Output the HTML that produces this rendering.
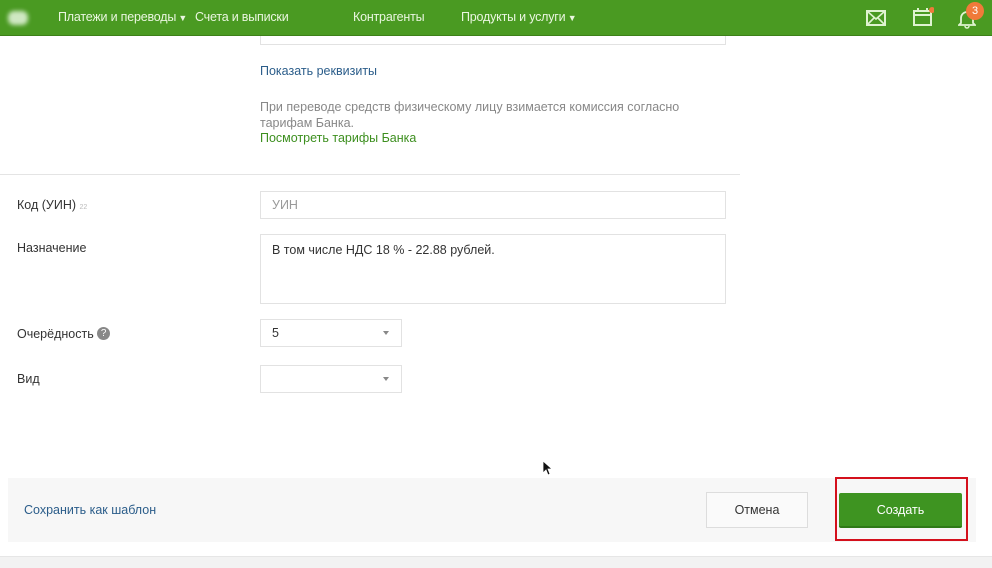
<!DOCTYPE html>
<html><head><meta charset="utf-8"><style>
*{box-sizing:border-box;margin:0;padding:0}
body{width:992px;height:568px;overflow:hidden;background:#fff;font-family:"Liberation Sans",sans-serif;position:relative;color:#333}
.hdr{position:absolute;left:0;top:0;width:992px;height:36px;background:#4a9a22;border-bottom:1px solid #3d8019}
.hdr span.n{position:absolute;top:10px;color:#eaf6e0;font-size:12.5px;letter-spacing:-0.2px;white-space:nowrap}
.ab{position:absolute}
.lbl{position:absolute;left:17px;font-size:12.5px;color:#333;white-space:nowrap}
.inp{position:absolute;border:1px solid #e2e2e2;background:#fff;font-size:12.5px;padding:0 11px}
.caret{position:absolute;right:12px;top:50%;margin-top:-2px;border-left:3px solid transparent;border-right:3px solid transparent;border-top:4px solid #888}
</style></head><body>
<div class="hdr">
<div class="ab" style="left:8px;top:11px;width:20px;height:14px;background:#cfe8c2;border-radius:6px;filter:blur(2px)"></div>
<span class="n" style="left:58px">Платежи и переводы<span style="font-size:9px"> ▼</span></span>
<span class="n" style="left:195px">Счета и выписки</span>
<span class="n" style="left:353px">Контрагенты</span>
<span class="n" style="left:461px">Продукты и услуги<span style="font-size:9px"> ▼</span></span>
<svg class="ab" style="left:866px;top:10px" width="20" height="16" viewBox="0 0 20 16"><rect x="1" y="1" width="18" height="14" fill="none" stroke="#dff3d0" stroke-width="2"/><path d="M1 1L10 9L19 1M1 15L8 8M19 15L12 8" fill="none" stroke="#dff3d0" stroke-width="1.6"/></svg>
<svg class="ab" style="left:912px;top:7px" width="22" height="20" viewBox="0 0 22 20"><rect x="2" y="4" width="17" height="14" fill="none" stroke="#dff3d0" stroke-width="2"/><path d="M2 8H19M6 1V5M15 1V5" stroke="#dff3d0" stroke-width="2"/><circle cx="20" cy="3" r="3" fill="#f07a3a"/></svg>
<svg class="ab" style="left:958px;top:9px" width="18" height="20" viewBox="0 0 18 20"><path d="M3 14V9A6 6 0 0 1 15 9V14L17 16H1Z" fill="none" stroke="#dff3d0" stroke-width="1.8"/><path d="M7 17A2 2 0 0 0 11 17" stroke="#dff3d0" stroke-width="1.5" fill="none"/></svg>
<div class="ab" style="left:966px;top:2px;width:18px;height:18px;border-radius:50%;background:#f07a3a;color:#fff;font-size:11px;text-align:center;line-height:18px">3</div>
</div>
<div class="ab" style="left:260px;top:36px;width:466px;height:9px;border:1px solid #e2e2e2;border-top:none"></div>
<div class="ab" style="left:260px;top:64px;font-size:12.5px;color:#2b5d8a">Показать реквизиты</div>
<div class="ab" style="left:260px;top:99px;width:470px;font-size:12.5px;line-height:16px;color:#888">При переводе средств физическому лицу взимается комиссия согласно тарифам Банка.</div>
<div class="ab" style="left:260px;top:131px;font-size:12.5px;color:#3d8f1f">Посмотреть тарифы Банка</div>
<div class="ab" style="left:0;top:174px;width:740px;height:1px;background:#e4e4e4"></div>
<div class="lbl" style="top:198px">Код (УИН) <span style="font-size:7px;color:#bbb">22</span></div>
<div class="inp" style="left:260px;top:191px;width:466px;height:28px;line-height:26px;color:#999">УИН</div>
<div class="lbl" style="top:241px">Назначение</div>
<div class="inp" style="left:260px;top:234px;width:466px;height:70px;padding-top:8px">В том числе НДС 18 % - 22.88 рублей.</div>
<div class="lbl" style="top:327px">Очерёдность <span style="display:inline-block;width:13px;height:13px;border-radius:50%;background:#888;color:#fff;font-size:10px;text-align:center;line-height:13px;vertical-align:middle;margin-top:-3px">?</span></div>
<div class="inp" style="left:260px;top:319px;width:142px;height:28px;line-height:26px">5<div class="caret"></div></div>
<div class="lbl" style="top:372px">Вид</div>
<div class="inp" style="left:260px;top:365px;width:142px;height:28px"><div class="caret"></div></div>
<svg class="ab" style="left:542px;top:460px" width="10" height="16" viewBox="0 0 10 16"><path d="M1 1V13L4 10L6 15L8 14L6 9H10Z" fill="#111" stroke="#fff" stroke-width=".8"/></svg>
<div class="ab" style="left:8px;top:478px;width:968px;height:64px;background:#f7f7f7"></div>
<div class="ab" style="left:0;top:556px;width:992px;height:12px;background:#f2f2f2;border-top:1px solid #e6e6e6"></div>
<div class="ab" style="left:24px;top:503px;font-size:12.5px;color:#2b5d8a">Сохранить как шаблон</div>
<div class="ab" style="left:706px;top:492px;width:102px;height:36px;border:1px solid #ddd;background:#fafafa;font-size:12.5px;text-align:center;line-height:34px;color:#333">Отмена</div>
<div class="ab" style="left:835px;top:477px;width:133px;height:64px;border:2px solid #d4101c"></div>
<div class="ab" style="left:839px;top:493px;width:123px;height:35px;background:#3e9421;border-bottom:2px solid #2f7a17;font-size:12.5px;text-align:center;line-height:34px;color:#fff;border-radius:2px">Создать</div>
</body></html>
